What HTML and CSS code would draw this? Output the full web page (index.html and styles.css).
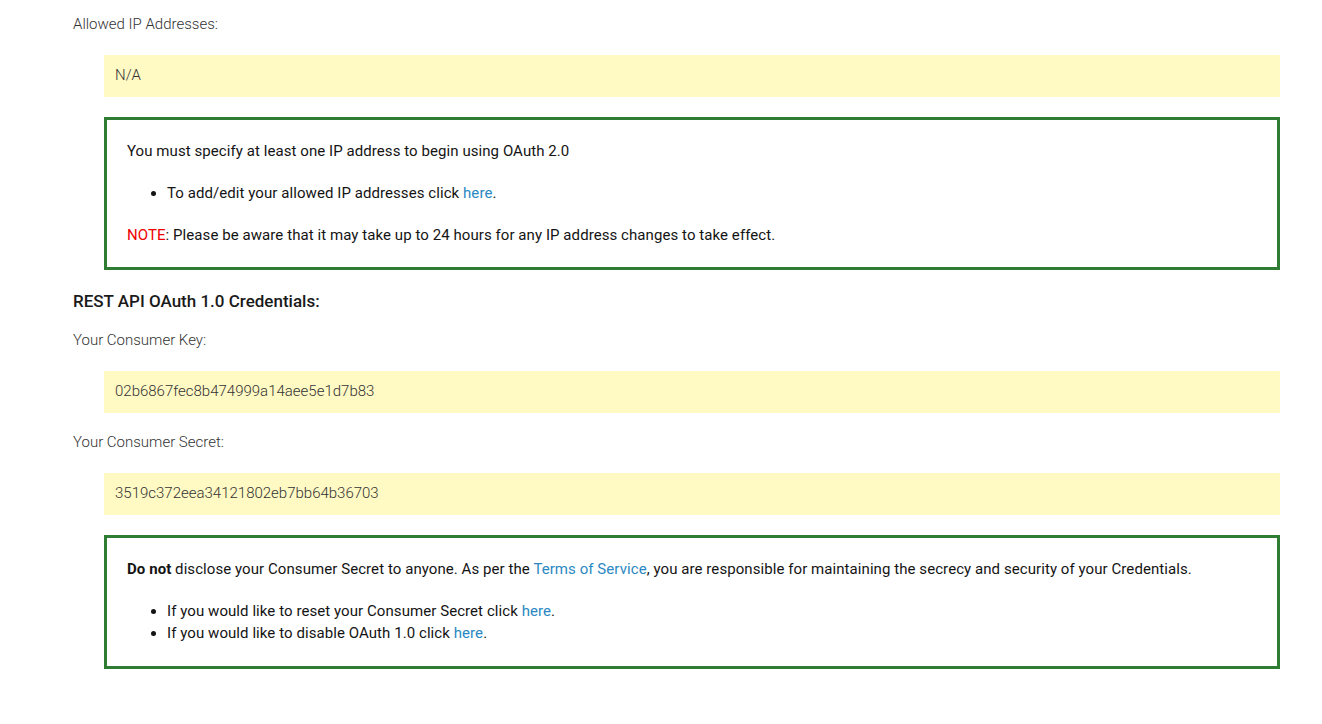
FILE: index.html
```html
<!DOCTYPE html>
<html lang="en">
<head>
<meta charset="utf-8">
<title>API Credentials</title>
<link rel="stylesheet" href="styles.css">
</head>
<body>
<div class="page">
  <div class="label first">Allowed IP Addresses:</div>
  <div class="value">N/A</div>
  <div class="notice">
    <p>You must specify at least one IP address to begin using OAuth 2.0</p>
    <ul>
      <li>To add/edit your allowed IP addresses click <a href="#">here</a>.</li>
    </ul>
    <p><span class="red">NOTE</span>: Please be aware that it may take up to 24 hours for any IP address changes to take effect.</p>
  </div>

  <h3 class="heading">REST API OAuth 1.0 Credentials:</h3>
  <div class="label after-heading">Your Consumer Key:</div>
  <div class="value">02b6867fec8b474999a14aee5e1d7b83</div>
  <div class="label">Your Consumer Secret:</div>
  <div class="value">3519c372eea34121802eb7bb64b36703</div>
  <div class="notice last">
    <p><strong>Do not</strong> disclose your Consumer Secret to anyone. As per the <a href="#">Terms of Service</a>, you are responsible for maintaining the secrecy and security of your Credentials.</p>
    <ul>
      <li>If you would like to reset your Consumer Secret click <a href="#">here</a>.</li>
      <li>If you would like to disable OAuth 1.0 click <a href="#">here</a>.</li>
    </ul>
  </div>
</div>
</body>
</html>
```

FILE: styles.css
```css
html, body {
  margin: 0;
  padding: 0;
  background: #ffffff;
}

body {
  font-family: Roboto, "Liberation Sans", Arial, sans-serif;
  font-size: 15px;
  color: #222222;
}

.page {
  padding: 14px 42px 40px 73px;
}

.label {
  font-weight: 300;
  color: #333333;
  line-height: 20px;
  margin-top: 19px;
}

.label.first {
  margin-top: 0;
}

.label.after-heading {
  margin-top: 18px;
}

.value {
  margin: 21px 0 0 31px;
  background: #fff9c4;
  padding: 10px 11px 12px;
  line-height: 20px;
  font-weight: 300;
  color: #333333;
}

.notice {
  margin: 20px 0 0 31px;
  border: 3px solid #2e7d32;
  padding: 21px 20px 21px;
  line-height: 21px;
  color: #141414;
  letter-spacing: 0.07px;
}

.notice.last {
  padding-bottom: 22px;
}

.notice p {
  margin: 0;
}

.notice ul {
  margin: 20px 0 21px;
  padding-left: 40px;
}

.notice li {
  line-height: 22px;
}

.notice.last ul {
  margin-bottom: 0;
}

.notice strong {
  font-weight: 700;
}

.notice a {
  color: #2a88c2;
  text-decoration: none;
}

.red {
  color: #ee0000;
}

.heading {
  margin: 20px 0 0;
  font-size: 17px;
  line-height: 22px;
  font-weight: 500;
  color: #1a1a1a;
}
```
